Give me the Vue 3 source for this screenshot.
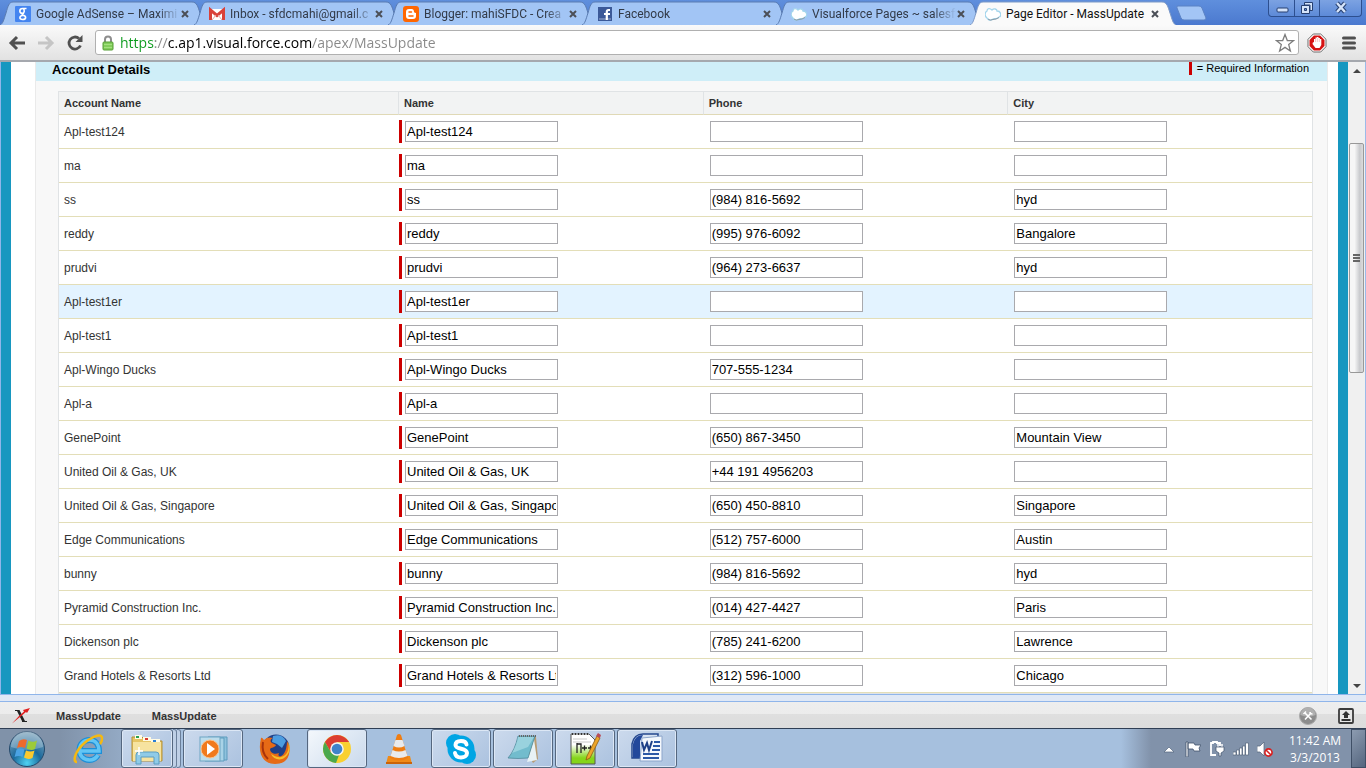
<script setup>
import { ref } from 'vue'

const tabs = [
  { icon: 'google', title: 'Google AdSense – Maximi' },
  { icon: 'gmail', title: 'Inbox - sfdcmahi@gmail.c' },
  { icon: 'blogger', title: 'Blogger: mahiSFDC - Crea' },
  { icon: 'facebook', title: 'Facebook' },
  { icon: 'cloud', title: 'Visualforce Pages ~ salesf' },
  { icon: 'cloud', title: 'Page Editor - MassUpdate', active: true },
]

const url = ref('https://c.ap1.visual.force.com/apex/MassUpdate')

const makeAccount = (account, phone = '', city = '') => ({ account, name: account, phone, city })

const accounts = ref([
  makeAccount('Apl-test124'),
  makeAccount('ma'),
  makeAccount('ss', '(984) 816-5692', 'hyd'),
  makeAccount('reddy', '(995) 976-6092', 'Bangalore'),
  makeAccount('prudvi', '(964) 273-6637', 'hyd'),
  makeAccount('Apl-test1er'),
  makeAccount('Apl-test1'),
  makeAccount('Apl-Wingo Ducks', '707-555-1234'),
  makeAccount('Apl-a'),
  makeAccount('GenePoint', '(650) 867-3450', 'Mountain View'),
  makeAccount('United Oil & Gas, UK', '+44 191 4956203'),
  makeAccount('United Oil & Gas, Singapore', '(650) 450-8810', 'Singapore'),
  makeAccount('Edge Communications', '(512) 757-6000', 'Austin'),
  makeAccount('bunny', '(984) 816-5692', 'hyd'),
  makeAccount('Pyramid Construction Inc.', '(014) 427-4427', 'Paris'),
  makeAccount('Dickenson plc', '(785) 241-6200', 'Lawrence'),
  makeAccount('Grand Hotels & Resorts Ltd', '(312) 596-1000', 'Chicago'),
])

const hovered = ref(5)
</script>

<template>
  <div class="screen">
    <header class="tab-strip">
      <div v-for="(tab, i) in tabs" :key="i" class="tab" :class="{ active: tab.active }">
        <svg class="tab-shape" viewBox="0 0 206 24" preserveAspectRatio="none">
          <path d="M0 24 C3 23 4 18 6 12 C8 5 9 1 13 1 H192 C197 1 198 6 200 12 C202 18 203 23 206 24" />
        </svg>
        <svg class="favicon" viewBox="0 0 16 16">
          <g v-if="tab.icon === 'google'">
            <rect width="16" height="16" rx="1" fill="#4384f0" />
            <path d="M11.500 2.500H7.500C4 2.500 4 7.500 7.300 7.300C9.500 7.300 10 3.500 8 2.500M7.300 7.300C6.800 8.200 7.500 8.700 8.300 9.200C11.500 10 11.500 13.500 7.600 13.500C3.800 13.500 4 9.500 8.300 9.200" fill="none" stroke="#fff" stroke-width="1.600" />
          </g>
          <g v-else-if="tab.icon === 'gmail'">
            <rect y="3" width="16" height="11" fill="#fff" />
            <path d="M1.500 14V4L8 9.500L14.500 4V14" fill="none" stroke="#d9413a" stroke-width="3" />
            <path d="M3 14L7 9M13 14L9 9" stroke="#e5a5a2" />
          </g>
          <g v-else-if="tab.icon === 'blogger'">
            <rect width="16" height="16" rx="3" fill="#f60" />
            <path d="M6 3H8.500Q11 3 11 6Q11.500 7 13 7V10Q13 13 10 13H6Q3 13 3 10V6Q3 3 6 3Z" fill="#fff" />
            <path d="M6 6H8.500M6 10H10" stroke="#f60" stroke-width="1.500" stroke-linecap="round" />
          </g>
          <g v-else-if="tab.icon === 'facebook'">
            <rect x="1" y="1" width="14" height="14" fill="#3b5998" />
            <rect x="2" y="12" width="12" height="2" fill="#6d84b4" />
            <path d="M13 4H11.500Q9.800 4 9.800 6V14M7 8H13" fill="none" stroke="#fff" stroke-width="2.200" />
          </g>
          <g v-else>
            <path d="M2 12C-1 10 0 6 2 5C2 2 5 2 7 4C9 2 12 3 12 5C16 5 17 10 14 11C12 14 9 12 8 13C5 15 3 14 2 12Z" fill="#fff" stroke="#a3d5ec" stroke-width="1.300" />
            <path d="M3 13Q5 15 8 13.500Q11 13.500 14 11.500" fill="none" stroke="#8a9aa5" stroke-width="1" />
          </g>
        </svg>
        <a href="#" class="tab-title">{{ tab.title }}</a>
        <button class="tab-close" :aria-label="`Close ${tab.title}`">
          <svg viewBox="0 0 8 8"><path d="M1 1L7 7M7 1L1 7" stroke="#4b4f57" stroke-width="2" /></svg>
        </button>
      </div>
      <button class="new-tab" aria-label="New tab">
        <svg viewBox="0 0 33 16">
          <path d="M3 1H24Q26 1 27 3L31 13Q31 15 29 15H9Q7 15 6 13L2 3Q1 1 3 1Z" fill="#a3c5f5" stroke="#5b82c4" />
        </svg>
      </button>
      <div class="window-buttons">
        <button aria-label="Minimize">
          <svg viewBox="0 0 16 14"><rect x="3" y="8" width="11" height="4" rx="1" fill="#d5e4fa" stroke="#263f70" /></svg>
        </button>
        <button aria-label="Restore">
          <svg viewBox="0 0 16 14">
            <path d="M5.500 2.500H13.500V10.500H11V5H5.500Z" fill="#d5e4fa" stroke="#263f70" />
            <path d="M2.500 5.500H10.500V13.500H2.500ZM5.500 8.500V10.500H7.500V8.500Z" fill="#d5e4fa" fill-rule="evenodd" stroke="#263f70" />
          </svg>
        </button>
        <button class="wide" aria-label="Close window">
          <svg viewBox="0 0 16 14">
            <path d="M4 3L12 12M12 3L4 12" stroke="#263f70" stroke-width="4.500" />
            <path d="M4 3L12 12M12 3L4 12" stroke="#d5e4fa" stroke-width="2.500" />
          </svg>
        </button>
      </div>
    </header>

    <nav class="toolbar">
      <button class="tool" aria-label="Back">
        <svg viewBox="0 0 18 18"><path d="M17 9H3M9 3L3 9L9 15" fill="none" stroke="#505050" stroke-width="3" /></svg>
      </button>
      <button class="tool" aria-label="Forward">
        <svg viewBox="0 0 18 18"><path d="M1 9H15M9 3L15 9L9 15" fill="none" stroke="#c5c5c5" stroke-width="3" /></svg>
      </button>
      <button class="tool" aria-label="Reload">
        <svg viewBox="0 0 18 18">
          <path d="M14.500 11.500A6 6 0 1 1 13 4.500" fill="none" stroke="#505050" stroke-width="2.800" />
          <path d="M16.500 1V8H9.500Z" fill="#505050" />
        </svg>
      </button>
      <div class="omnibox">
        <svg class="lock" viewBox="0 0 12 16">
          <path d="M3 8V4.500Q3 1.500 6 1.500T9 4.500V8" fill="none" stroke="#8d8d8d" stroke-width="2" />
          <rect x="1" y="7" width="10" height="8" rx="1" fill="#83cd5c" stroke="#559e35" />
          <path d="M2 9.500H10M2 12.500H10" stroke="#a4e17f" />
        </svg>
        <input v-model="url" type="text" aria-label="Address" spellcheck="false">
        <button class="star" aria-label="Bookmark this page">
          <svg viewBox="0 0 20 20">
            <path d="M10 1.500L12.300 7.500L18.500 7.700L13.700 11.600L15.400 18L10 14.400L4.600 18L6.300 11.600L1.500 7.700L7.700 7.500Z" fill="#fff" stroke="#7d7d7d" stroke-width="1.300" />
          </svg>
        </button>
      </div>
      <button class="tool adblock" aria-label="AdBlock">
        <svg viewBox="0 0 20 20">
          <path d="M6.300 1H13.700L19 6.300V13.700L13.700 19H6.300L1 13.700V6.300Z" fill="#fff" stroke="#6c6c6c" />
          <path d="M6.900 2.500H13.100L17.500 6.900V13.100L13.100 17.500H6.900L2.500 13.100V6.900Z" fill="#d61212" />
          <path d="M6 9L7 9.500V6H8.500V4.500H10V4H11.500V5H13V6H14.300V12L12.500 15H8.500L5.500 11Z" fill="#fff" />
          <path d="M8.500 5.500V9M10.300 5V9M12.300 5.500V9" stroke="#e88" stroke-width="0.500" />
        </svg>
      </button>
      <button class="tool menu" aria-label="Menu">
        <svg viewBox="0 0 18 18"><path d="M3.500 4H14.500M3.500 9H14.500M3.500 14H14.500" stroke="#505050" stroke-width="3" stroke-linecap="round" /></svg>
      </button>
    </nav>

    <div class="viewport">
      <main class="page">
        <section class="block">
          <div class="block-header">
            <h3>Account Details</h3>
            <div class="required-info"><span class="required-mark"></span>= Required Information</div>
          </div>
          <table class="list">
            <thead>
              <tr>
                <th class="col-account">Account Name</th>
                <th>Name</th>
                <th>Phone</th>
                <th>City</th>
              </tr>
            </thead>
            <tbody>
              <tr
                v-for="(row, i) in accounts"
                :key="i"
                :class="{ highlight: hovered === i }"
                @mouseenter="hovered = i"
              >
                <td>{{ row.account }}</td>
                <td class="required">
                  <div class="required-input"><input v-model="row.name" type="text" :aria-label="`Name, ${row.account}`"></div>
                </td>
                <td class="field"><input v-model="row.phone" type="text" :aria-label="`Phone, ${row.account}`"></td>
                <td class="field"><input v-model="row.city" type="text" :aria-label="`City, ${row.account}`"></td>
              </tr>
            </tbody>
          </table>
        </section>
      </main>
      <div class="scrollbar">
        <button aria-label="Scroll up"><svg viewBox="0 0 8 4"><path d="M0 4L4 0L8 4Z" fill="#444" /></svg></button>
        <div class="track-above"></div>
        <div class="thumb"><i></i><i></i><i></i></div>
        <div class="track-below"></div>
        <button aria-label="Scroll down"><svg viewBox="0 0 8 4"><path d="M0 0L4 4L8 0Z" fill="#444" /></svg></button>
      </div>
    </div>

    <div class="addon-bar">
      <button class="addon-logo" aria-label="Toolbar logo">
        <svg viewBox="0 0 20 16">
          <path d="M4 2H8.500L14 13H16V14H11V13L6 3H4Z" fill="#222" />
          <path d="M1 15.500L8 8L13 3.500L12 2L19 0L16 5L15 4L9 9Z" fill="#e02020" />
        </svg>
      </button>
      <a href="#">MassUpdate</a>
      <a href="#">MassUpdate</a>
      <button class="addon-tools" aria-label="Tools">
        <svg viewBox="0 0 18 18">
          <circle cx="9" cy="9" r="8.500" fill="#8c8c8c" stroke="#aaa" />
          <path d="M1.500 8A7.500 7.500 0 0 1 16.500 8Q9 11 1.500 8Z" fill="#b0b0b0" />
          <path d="M6 6L12.500 12.500M12 6L6 12.500" stroke="#fff" stroke-width="1.600" />
          <path d="M4.500 7L7 4.500M11 5Q11 7 13.500 7" fill="none" stroke="#fff" stroke-width="1.500" />
        </svg>
      </button>
      <button class="addon-dock" aria-label="Undock">
        <svg viewBox="0 0 16 16">
          <rect x="1" y="1" width="14" height="14" rx="1" fill="#e8e8e8" stroke="#3b3b3b" stroke-width="1.800" />
          <path d="M8 3L12 7H10V10H6V7H4Z" fill="#333" />
          <rect x="3.500" y="11" width="9" height="2" fill="#333" />
        </svg>
      </button>
    </div>

    <footer class="taskbar">
      <button class="start" aria-label="Start">
        <svg viewBox="0 0 38 38">
          <defs>
            <radialGradient id="orb" cx="0.5" cy="0.9" r="0.9">
              <stop offset="0" stop-color="#4fd2f2" />
              <stop offset="0.45" stop-color="#1c6a9c" />
              <stop offset="1" stop-color="#86a9bf" />
            </radialGradient>
          </defs>
          <circle cx="19" cy="19" r="17.500" fill="url(#orb)" stroke="#24496b" />
          <path d="M3 17A16 16 0 0 1 35 17Q19 23 3 17Z" fill="#fff" opacity="0.25" />
          <path d="M11 11Q15 8 19 10L17 18Q13 16 9 18Z" fill="#ee6a2c" />
          <path d="M20.500 10.500Q25 13 29 10.500L27 19Q23 21 18.500 18.500Z" fill="#9ccb3b" />
          <path d="M8.500 19.500Q12.500 17.500 16.500 19.500L14.500 27Q11 25 6.500 27Z" fill="#4ba3e3" />
          <path d="M18 20.500Q22.500 22.500 26.500 20.500L24.500 28Q20 30 16 27.500Z" fill="#fcc92e" />
        </svg>
      </button>

      <button class="task" aria-label="Internet Explorer">
        <svg viewBox="0 0 32 32">
          <path d="M25 22Q22 27 16.500 27C10 27 6.500 22.500 6.500 17C6.500 11 11 7 16.500 7C22.500 7 26 11.500 26 18H8" fill="none" stroke="#1d8fd8" stroke-width="6" />
          <path d="M25 22Q22 27 16.500 27C10 27 6.500 22.500 6.500 17C6.500 11 11 7 16.500 7C22.500 7 26 11.500 26 18H8" fill="none" stroke="#62c5f5" stroke-width="3.500" />
          <path d="M4 29C-1 29 2 18 12 9.500C21 2 30 0 29 6C29 8 28 10 27 11" fill="none" stroke="#f5b912" stroke-width="2.500" />
        </svg>
      </button>
      <div class="stack">
        <button class="task open" aria-label="Windows Explorer">
          <svg viewBox="0 0 32 32">
            <path d="M1 4H11L13 6H20L22 8H31V28H1Z" fill="#e6c565" stroke="#b28f37" />
            <rect x="4" y="2" width="7" height="4" fill="#fffbe5" /><rect x="5" y="3" width="3" height="2" fill="#28a052" />
            <rect x="12" y="4" width="8" height="4" fill="#fffbe5" /><rect x="14" y="5" width="3" height="2" fill="#d63b30" />
            <rect x="20" y="6" width="9" height="4" fill="#fffbe5" /><rect x="22" y="7" width="3" height="2" fill="#2a7fd4" />
            <path d="M2 9H30V28H2Z" fill="#f6e3a0" />
            <path d="M5 31V22Q5 19 8 19H25Q28 19 28 22V31H23V24H10V31Z" fill="#8fcbe8" stroke="#5a9dc2" />
            <path d="M8 14V22M4 18H12" stroke="#fff" stroke-width="1.500" />
          </svg>
        </button>
        <span class="stack-edge"></span>
        <span class="stack-edge"></span>
      </div>
      <button class="task open" aria-label="Windows Media Player">
        <svg viewBox="0 0 32 32">
          <path d="M11 4H30V27H11Z" fill="#8fc2dd" stroke="#5d9bbd" />
          <path d="M8 5H27V28H8Z" fill="#a9d3e7" stroke="#5d9bbd" />
          <rect x="3" y="4" width="20" height="24" fill="#bdddec" stroke="#6fa6c3" />
          <circle cx="13" cy="16" r="9" fill="#f07a1d" stroke="#fbc28c" />
          <path d="M10 10L18 16L10 22Z" fill="#fff" />
        </svg>
      </button>
      <button class="task" aria-label="Firefox">
        <svg viewBox="0 0 32 32">
          <circle cx="17" cy="15" r="13.500" fill="#203f87" />
          <path d="M14 3Q23 0 27 8L23 15L18 11L13 9Z" fill="#4c9de0" />
          <path d="M2 5C3 4 4 6 5 7C8 4 11 4 14 5C11 6 11 9 13 10L17 12C16 15 12 14 11 16C11 20 16 22 20 20C17 26 28 25 28 8C33 17 31 31 16 31C5 31 -2 22 2 5Z" fill="#e66a16" />
          <path d="M29 9C31 16 28 23 22 24C18 25 14 22 12 21C15 28 26 29 30 19Q32 14 29 9Z" fill="#f9bd28" />
          <path d="M4 9Q2 20 9 26" fill="none" stroke="#a8330b" stroke-width="2" />
        </svg>
      </button>
      <button class="task open current" aria-label="Google Chrome">
        <svg viewBox="0 0 32 32">
          <circle cx="16" cy="16" r="14" fill="#f9d030" />
          <path d="M3.900 9A14 14 0 0 1 28.100 9H16L10 19.500Z" fill="#dc3d31" />
          <path d="M3.900 9L10 19.500Q13 23 18 22L15 30A14 14 0 0 1 3.900 9Z" fill="#4aa84d" />
          <circle cx="16" cy="16" r="6.800" fill="#f4f4f4" />
          <circle cx="16" cy="16" r="5.300" fill="#3f83ca" />
        </svg>
      </button>
      <button class="task" aria-label="VLC media player">
        <svg viewBox="0 0 32 32">
          <path d="M5 23H27L29 31H3Z" fill="#f08a18" />
          <path d="M14 2Q16 0 18 2L25 25Q16 30 7 25Z" fill="#ef7d12" />
          <path d="M12.500 7H19.500L21.500 13Q16 16 10.500 13ZM9.500 17Q16 20 22.500 17L24.500 23Q16 27 7.500 23Z" fill="#e9eaec" />
          <path d="M3 30H29" stroke="#cb6308" stroke-width="2" />
        </svg>
      </button>
      <button class="task open" aria-label="Skype">
        <svg viewBox="0 0 32 32">
          <circle cx="10" cy="10" r="9" fill="#00a5e4" />
          <circle cx="22" cy="22" r="9" fill="#00a5e4" />
          <circle cx="16" cy="16" r="13.500" fill="#00a5e4" />
          <path d="M21.500 11.500C21 8.500 18.500 8 16 8C12.500 8 10.500 9.500 10.500 12C10.500 17 22 14.500 22 20C22 23 19 24.500 16 24.500C12.500 24.500 10.500 23 10 20" fill="none" stroke="#fff" stroke-width="4" stroke-linecap="round" />
        </svg>
      </button>
      <button class="task open" aria-label="Notepad">
        <svg viewBox="0 0 32 32">
          <path d="M12 4H29L31 26L26 30Z" fill="#b89c72" />
          <path d="M27 6L30 27L20 29Z" fill="#e8f2f5" />
          <path d="M11 3H28L21 25Q11 26 1 25Q8 17 11 3Z" fill="#72bccd" stroke="#4b8495" stroke-width="0.700" />
          <path d="M11 4H27L21 14L5 20Q10 11 11 4Z" fill="#a9dce6" opacity="0.700" />
          <path d="M12 3H29" stroke="#666" stroke-width="2" stroke-dasharray="1 1" />
        </svg>
      </button>
      <button class="task open" aria-label="Notepad++">
        <svg viewBox="0 0 32 32">
          <defs>
            <linearGradient id="npp" x1="0" y1="0" x2="0" y2="1">
              <stop offset="0.35" stop-color="#fff" />
              <stop offset="0.8" stop-color="#85d51a" />
            </linearGradient>
          </defs>
          <path d="M2 1H20L26 7V31H2Z" fill="url(#npp)" stroke="#555" />
          <path d="M3 1H19" stroke="#333" stroke-dasharray="1 2" stroke-width="2" />
          <path d="M4 6H18M4 9H22" stroke="#c9c9c9" />
          <path d="M8 20V10M8 11H12V20M13 15H18M15.500 12.500V17.500M19 15H24M21.500 12.500V17.500" fill="none" stroke="#222" stroke-width="1.300" />
          <path d="M28 3L31 5L21 25L17 27L18 23Z" fill="#eca52a" stroke="#8d5a12" stroke-width="0.800" />
          <path d="M27 3L29 0L32 2L31 5Z" fill="#b94d5a" />
        </svg>
      </button>
      <button class="task open" aria-label="Microsoft Word">
        <svg viewBox="0 0 32 32">
          <path d="M1 25V11Q3 1 12 1H27V25Z" fill="#d8e3f2" stroke="#25488f" stroke-width="1.500" />
          <path d="M2 25V11Q4 2 12 2L9 8V25Z" fill="#22489b" />
          <path d="M11 5L31 3L31 28L9 28Z" fill="#f4f8fd" stroke="#8ca5cb" />
          <path d="M23 9H29M22 13H29M21 17H29M12 21H28M12 25H28" stroke="#2b58a6" stroke-width="2" />
          <path d="M11 9L13 17L16 10L18 17L21 8" fill="none" stroke="#1d3f86" stroke-width="2" />
        </svg>
      </button>

      <div class="tray">
        <button class="tray-icon" aria-label="Show hidden icons">
          <svg viewBox="0 0 16 16"><path d="M3 11L8 6L13 11Z" fill="#fff" stroke="#53657f" stroke-width="0.700" /></svg>
        </button>
        <button class="tray-icon" aria-label="Action Center">
          <svg viewBox="0 0 16 16"><path d="M1 1H3V16H1ZM3 2H9L10 4H16L14 7L15 10H9L8 8H3Z" fill="#fff" stroke="#3f516b" stroke-width="0.800" /></svg>
        </button>
        <button class="tray-icon" aria-label="Battery">
          <svg viewBox="0 0 16 16">
            <path d="M7 14H2V2H4V1H8V2H11V5" fill="none" stroke="#fff" stroke-width="1.800" />
            <path d="M9 3V7M13 3V7" stroke="#fff" stroke-width="1.500" />
            <path d="M7 6H15V10L12 12V15H10V12L7 10Z" fill="#fff" stroke="#3f516b" stroke-width="0.700" />
          </svg>
        </button>
        <button class="tray-icon" aria-label="Network">
          <svg viewBox="0 0 16 16"><path d="M0 11H3V14H0ZM3.500 9H6V14H3.500ZM6.500 7H9V14H6.500ZM9.500 5H12V14H9.500ZM12.500 2H15.500V14H12.500Z" fill="#fff" stroke="#50617a" stroke-width="0.700" /></svg>
        </button>
        <button class="tray-icon" aria-label="Volume muted">
          <svg viewBox="0 0 16 16">
            <path d="M0 5H3L7 1V15L3 11H0Z" fill="#fff" stroke="#50617a" stroke-width="0.700" />
            <circle cx="11.500" cy="11.500" r="3.600" fill="#fff" stroke="#d81f1f" stroke-width="1.600" />
            <path d="M9 9L14 14" stroke="#d81f1f" stroke-width="1.600" />
          </svg>
        </button>
        <div class="clock">
          <time>11:42 AM</time>
          <time>3/3/2013</time>
        </div>
        <button class="show-desktop" aria-label="Show desktop"></button>
      </div>
    </footer>
  </div>
</template>

<style>
body {
  margin: 0;
  overflow: hidden;
}
</style>

<style scoped>
.screen {
  display: flex;
  flex-direction: column;
  height: 100vh;
  overflow: hidden;
  font-family: "Liberation Sans", Arial, sans-serif;
  background: #fff;
}
button {
  padding: 0;
  border: none;
  background: none;
  font: inherit;
}
svg {
  display: block;
}

/* tab strip */
.tab-strip {
  display: flex;
  flex: none;
  height: 25px;
  padding: 0 4px 0 0;
  background: linear-gradient(#5f8fdd, #4b79cf);
}
.tab {
  position: relative;
  display: flex;
  align-items: center;
  flex: 0 1 206px;
  min-width: 0;
  margin-right: -12px;
  padding: 2px 17px 0 15px;
  box-sizing: border-box;
}
.tab-shape {
  position: absolute;
  inset: 1px 0 0;
  width: 100%;
  height: 24px;
}
.tab-shape path {
  fill: #a2c5f5;
  stroke: #5a7cb2;
}
.tab.active {
  z-index: 2;
}
.tab.active .tab-shape path {
  fill: #fafafa;
  stroke: #7d99c6;
}
.favicon {
  position: relative;
  flex: none;
  width: 16px;
  height: 16px;
}
.tab-title {
  position: relative;
  flex: 1;
  min-width: 0;
  margin: 0 1px 0 5px;
  overflow: hidden;
  font-family: Roboto, "Noto Sans", sans-serif;
  font-size: 12px;
  line-height: 20px;
  white-space: nowrap;
  color: #323a48;
  text-decoration: none;
  mask-image: linear-gradient(90deg, #000 calc(100% - 22px), transparent);
}
.active .tab-title {
  color: #111;
  mask-image: none;
}
.tab-close {
  position: relative;
  flex: none;
  width: 8px;
  height: 8px;
}
.new-tab {
  flex: none;
  width: 33px;
  height: 16px;
  margin: 5px 0 0 11px;
}
.window-buttons {
  display: flex;
  height: 17px;
  margin-left: auto;
  border: 1px solid #2d4f8f;
  border-top: none;
  border-radius: 0 0 4px 4px;
  box-sizing: border-box;
  background: linear-gradient(#7ca2e2, #5d8ad8);
}
.window-buttons button {
  display: flex;
  justify-content: center;
  width: 25px;
}
.window-buttons button + button {
  border-left: 1px solid #2d4f8f;
}
.window-buttons .wide {
  width: 42px;
}
.window-buttons svg {
  width: 16px;
  height: 14px;
}

/* toolbar */
.toolbar {
  display: flex;
  align-items: center;
  flex: none;
  height: 37px;
  padding: 0 8px;
  box-sizing: border-box;
  border-bottom: 2px solid #a5a8ae;
  background: linear-gradient(#fafafa, #e2e2e2);
}
.tool {
  flex: none;
  width: 18px;
  height: 18px;
  margin-right: 11px;
}
.tool svg {
  width: 100%;
  height: 100%;
}
.omnibox {
  display: flex;
  align-items: center;
  flex: 1;
  height: 25px;
  margin-right: 8px;
  padding: 0 3px 0 5px;
  box-sizing: border-box;
  border: 1px solid #b0b0b0;
  border-radius: 3px;
  background: #fff;
}
.lock {
  width: 14px;
  height: 16px;
}
/* scheme, host and path are tinted separately */
.omnibox input {
  flex: 1;
  min-width: 0;
  margin-left: 5px;
  padding: 0;
  border: none;
  outline: none;
  font-family: "Open Sans", "Noto Sans", sans-serif;
  font-size: 14px;
  line-height: 22px;
  color: transparent;
  background: linear-gradient(90deg, #0a9a1c 35px, #888 35px, #888 48px, #000 48px, #000 192px, #888 192px);
  background-clip: text;
}
.star {
  width: 20px;
  height: 20px;
}
.adblock {
  width: 20px;
  height: 20px;
  margin-right: 13px;
}
.menu {
  margin-right: 0;
}

/* page */
.viewport {
  display: flex;
  flex: 1;
  min-height: 0;
  border-left: 1px solid #8fb5ea;
  border-right: 1px solid #9bbbe9;
}
.page {
  flex: 1;
  min-width: 0;
  overflow: hidden;
  padding: 0 10px 0 24px;
  border-left: 10px solid #1797c0;
  border-right: 10px solid #1797c0;
}
.block {
  min-height: 100%;
  border: solid #eaeaea;
  border-width: 0 1px;
  box-sizing: border-box;
  background: #f8f8f8;
}
.block-header {
  display: flex;
  justify-content: space-between;
  padding: 0 18px 4px 16px;
  line-height: 15px;
  background: #cfeef8;
}
.block-header h3 {
  margin: 0;
  font-size: 13px;
}
.required-info {
  display: flex;
  align-items: center;
  height: 13px;
  font-size: 11px;
}
.required-mark {
  width: 3px;
  height: 13px;
  margin-right: 5px;
  background: #c00;
}
.list {
  width: calc(100% - 36px);
  margin: 10px 14px 0 22px;
  border: 1px solid #e0e3e5;
  border-spacing: 0;
  table-layout: fixed;
  background: #fff;
}
.list th {
  height: 23px;
  padding: 0 5px;
  box-sizing: border-box;
  border-bottom: 1px solid #e0d9b6;
  font-size: 11px;
  text-align: left;
  color: #333;
  background: #f2f3f3;
}
.list th + th {
  border-left: 1px solid #e0e3e5;
}
.col-account {
  width: 339px;
}
.list td {
  height: 34px;
  padding: 0 5px;
  box-sizing: border-box;
  border-bottom: 1px solid #e3deb8;
  font-size: 12px;
  color: #333;
}
.list .required {
  padding: 0 1px;
}
.list .field {
  padding-left: 7px;
}
.highlight td {
  background: #e3f3ff;
}
.required-input {
  display: flex;
  align-items: center;
  height: 23px;
  padding-left: 3px;
  border-left: 3px solid #c00;
}
.list input {
  display: block;
  width: 153px;
  height: 21px;
  padding: 0 1px;
  box-sizing: border-box;
  border: 1px solid #a9a9ad;
  font-family: inherit;
  font-size: 13px;
  color: #000;
  background: #fff;
}

/* scrollbar */
.scrollbar {
  display: flex;
  flex-direction: column;
  width: 17px;
  background: #f0f0f0;
}
.scrollbar button {
  display: flex;
  justify-content: center;
  align-items: center;
  flex: none;
  height: 17px;
}
.scrollbar svg {
  width: 8px;
  height: 4px;
}
.track-above {
  flex: 64;
}
.track-below {
  flex: 305;
}
.thumb {
  display: flex;
  flex-direction: column;
  justify-content: center;
  align-items: center;
  gap: 1px;
  flex: 229;
  margin: 0 1px;
  border: 1px solid #989898;
  border-radius: 2px;
  box-sizing: border-box;
  background: linear-gradient(90deg, #f6f6f6 35%, #c9cacd 75%, #dcdcdc);
}
.thumb i {
  width: 7px;
  height: 2px;
  background: #666;
}

/* add-on bar */
.addon-bar {
  display: flex;
  align-items: center;
  flex: none;
  height: 34px;
  padding: 9px 12px 0 11px;
  box-sizing: border-box;
  border-top: 1px solid #8fb5ea;
  background: linear-gradient(#dfe8f6 6px, #8fb5ea 6px, #8fb5ea 7px, #eee 7px, #ececec 19px, #dfdfdf 19px, #dcdcdc);
}
.addon-bar a {
  margin-right: 31px;
  font-size: 11px;
  font-weight: bold;
  color: #333;
  text-decoration: none;
}
.addon-logo {
  width: 20px;
  height: 16px;
  margin-right: 25px;
}
.addon-tools {
  width: 18px;
  margin: 0 21px 0 auto;
}
.addon-dock {
  width: 16px;
}

/* taskbar */
.taskbar {
  display: flex;
  flex: none;
  gap: 2px;
  height: 40px;
  box-sizing: border-box;
  border-top: 1px solid #2f3e54;
  background: linear-gradient(90deg, #8092a9 60px, #a6c0de 180px);
}
.start {
  width: 38px;
  margin: 0 11px 0 8px;
}
.start svg {
  width: 38px;
  height: 38px;
}
.task {
  display: flex;
  justify-content: center;
  align-items: center;
  flex: 0 1 60px;
  box-sizing: border-box;
}
.task svg {
  width: 32px;
  height: 32px;
}
.open {
  border: 1px solid #55677f;
  border-radius: 3px;
  box-shadow: inset 0 0 0 1px #dce7f5;
  background: linear-gradient(135deg, #ccdaed, #abc2df);
}
.current {
  background: linear-gradient(135deg, #f4f8fc, #c9d9ec);
}
.stack {
  display: flex;
  flex: 0 1 60px;
}
.stack .task {
  flex: 1;
}
.stack-edge {
  width: 4px;
  box-sizing: border-box;
  border: solid #6b7f9a;
  border-width: 1px 1px 1px 0;
  border-radius: 0 3px 3px 0;
  background: #bfd0e6;
}
.tray {
  display: flex;
  align-items: center;
  margin-left: auto;
  padding-left: 40px;
  background: linear-gradient(90deg, #a6c0de, #8192aa 30px);
}
.tray-icon {
  width: 16px;
  height: 16px;
  margin-right: 8px;
}
.clock {
  display: flex;
  flex-direction: column;
  align-items: center;
  width: 60px;
  margin: 0 6px 0 4px;
  font-family: "Open Sans", "Noto Sans", sans-serif;
  font-size: 12px;
  line-height: 17px;
  color: #fff;
}
.show-desktop {
  width: 15px;
  height: 100%;
  border: 1px solid #3f4f66;
  background: linear-gradient(135deg, #8c9bb0, #55667f);
}
</style>
